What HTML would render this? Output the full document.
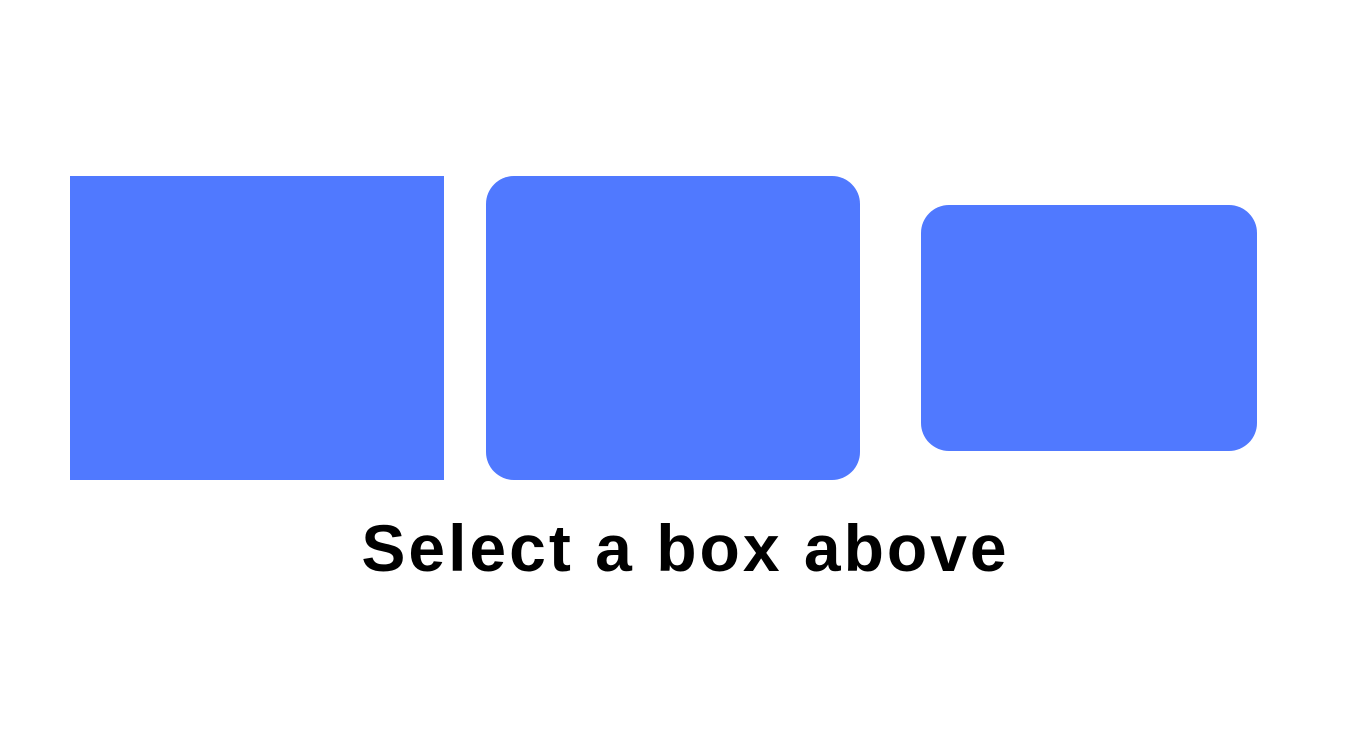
<!DOCTYPE html>
<html><head><style>
html,body{margin:0;padding:0;background:#fff;width:1371px;height:742px;overflow:hidden;position:relative}
.b{position:absolute;background:#5079FF}
.t{position:absolute;left:0;width:1371px;top:508px;text-align:center;font:bold 66px "Liberation Sans",sans-serif;color:#000;line-height:80px;letter-spacing:3px}
</style></head><body>
<div class="b" style="left:70px;top:176px;width:374px;height:304px"></div>
<div class="b" style="left:486px;top:176px;width:374px;height:304px;border-radius:28px"></div>
<div class="b" style="left:921px;top:205px;width:336px;height:246px;border-radius:28px"></div>
<div class="t">Select a box above</div>
</body></html>
